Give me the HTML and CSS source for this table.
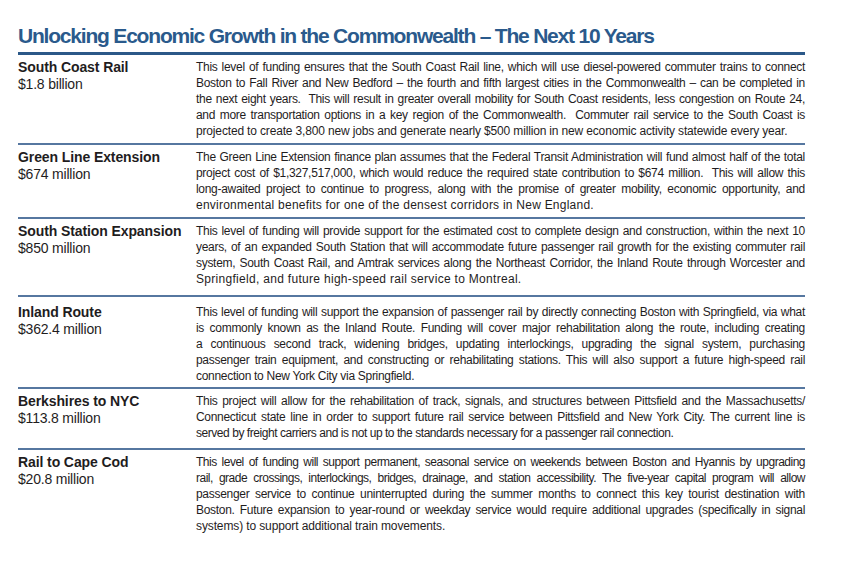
FILE: index.html
```html
<!DOCTYPE html>
<html lang="en">
<head>
<meta charset="utf-8">
<title>Unlocking Economic Growth in the Commonwealth</title>
<link rel="stylesheet" href="styles.css">
</head>
<body>
<main class="page">
  <h1 class="title">Unlocking Economic Growth in the Commonwealth – The Next 10 Years</h1>
  <section class="table">
    <div class="row row-1">
      <div class="label"><div class="name">South Coast Rail</div><div class="amount">$1.8 billion</div></div>
      <div class="desc">
        <div class="ln">This level of funding ensures that the South Coast Rail line, which will use diesel-powered commuter trains to connect</div>
        <div class="ln">Boston to Fall River and New Bedford – the fourth and fifth largest cities in the Commonwealth – can be completed in</div>
        <div class="ln">the next eight years.&nbsp; This will result in greater overall mobility for South Coast residents, less congestion on Route 24,</div>
        <div class="ln">and more transportation options in a key region of the Commonwealth.&nbsp; Commuter rail service to the South Coast is</div>
        <div class="ln last last-1">projected to create 3,800 new jobs and generate nearly $500 million in new economic activity statewide every year.</div>
      </div>
    </div>
    <div class="row row-2">
      <div class="label"><div class="name">Green Line Extension</div><div class="amount">$674 million</div></div>
      <div class="desc">
        <div class="ln">The Green Line Extension finance plan assumes that the Federal Transit Administration will fund almost half of the total</div>
        <div class="ln">project cost of $1,327,517,000, which would reduce the required state contribution to $674 million.&nbsp; This will allow this</div>
        <div class="ln">long-awaited project to continue to progress, along with the promise of greater mobility, economic opportunity, and</div>
        <div class="ln last last-2">environmental benefits for one of the densest corridors in New England.</div>
      </div>
    </div>
    <div class="row row-3">
      <div class="label"><div class="name">South Station Expansion</div><div class="amount">$850 million</div></div>
      <div class="desc">
        <div class="ln">This level of funding will provide support for the estimated cost to complete design and construction, within the next 10</div>
        <div class="ln">years, of an expanded South Station that will accommodate future passenger rail growth for the existing commuter rail</div>
        <div class="ln">system, South Coast Rail, and Amtrak services along the Northeast Corridor, the Inland Route through Worcester and</div>
        <div class="ln last last-3">Springfield, and future high-speed rail service to Montreal.</div>
      </div>
    </div>
    <div class="row row-4">
      <div class="label"><div class="name">Inland Route</div><div class="amount">$362.4 million</div></div>
      <div class="desc">
        <div class="ln">This level of funding will support the expansion of passenger rail by directly connecting Boston with Springfield, via what</div>
        <div class="ln">is commonly known as the Inland Route. Funding will cover major rehabilitation along the route, including creating</div>
        <div class="ln">a continuous second track, widening bridges, updating interlockings, upgrading the signal system, purchasing</div>
        <div class="ln">passenger train equipment, and constructing or rehabilitating stations. This will also support a future high-speed rail</div>
        <div class="ln last">connection to New York City via Springfield.</div>
      </div>
    </div>
    <div class="row row-5">
      <div class="label"><div class="name">Berkshires to NYC</div><div class="amount">$113.8 million</div></div>
      <div class="desc">
        <div class="ln">This project will allow for the rehabilitation of track, signals, and structures between Pittsfield and the Massachusetts/</div>
        <div class="ln">Connecticut state line in order to support future rail service between Pittsfield and New York City. The current line is</div>
        <div class="ln last last-5">served by freight carriers and is not up to the standards necessary for a passenger rail connection.</div>
      </div>
    </div>
    <div class="row row-6">
      <div class="label"><div class="name">Rail to Cape Cod</div><div class="amount">$20.8 million</div></div>
      <div class="desc">
        <div class="ln tight">This level of funding will support permanent, seasonal service on weekends between Boston and Hyannis by upgrading</div>
        <div class="ln tight">rail, grade crossings, interlockings, bridges, drainage, and station accessibility. The five-year capital program will allow</div>
        <div class="ln">passenger service to continue uninterrupted during the summer months to connect this key tourist destination with</div>
        <div class="ln">Boston. Future expansion to year-round or weekday service would require additional upgrades (specifically in signal</div>
        <div class="ln last last-6">systems) to support additional train movements.</div>
      </div>
    </div>
  </section>
</main>
</body>
</html>
```

FILE: styles.css
```css
html, body {
  margin: 0;
  padding: 0;
  background: #ffffff;
}

.page {
  width: 787px;
  margin-left: 18px;
  padding-top: 24px;
  font-family: "Liberation Sans", Arial, sans-serif;
  color: #1f1d1e;
}

.title {
  margin: 0;
  font-size: 21px;
  line-height: 24px;
  font-weight: bold;
  letter-spacing: -1.2px;
  color: #2a5a8c;
  padding-bottom: 4px;
  border-bottom: 3px solid #2b5888;
}

.table {
  display: flex;
  flex-direction: column;
}

.row {
  display: flex;
  padding: 4px 0 4px;
  border-bottom: 2px solid #5677a0;
}

.row-6 {
  border-bottom: none;
}

.row-3 {
  padding-bottom: 8px;
}

.row-4 {
  padding-top: 7px;
  padding-bottom: 3px;
}

.row-5 {
  padding-bottom: 7px;
}

.label {
  width: 178px;
  flex: none;
}

.name {
  font-size: 14px;
  font-weight: bold;
  line-height: 17px;
  letter-spacing: -0.1px;
}

.amount {
  font-size: 14px;
  line-height: 17px;
  letter-spacing: -0.2px;
}

.desc {
  flex: 1;
  font-size: 12px;
  line-height: 16px;
  letter-spacing: -0.3px;
}

.ln {
  text-align: justify;
  text-align-last: justify;
}

.ln.last {
  text-align-last: left;
}

.ln.tight {
  letter-spacing: -0.5px;
}

.last-1 {
  letter-spacing: -0.16px;
}

.last-2 {
  letter-spacing: 0.24px;
}

.last-3 {
  letter-spacing: 0.3px;
}

.last-5 {
  letter-spacing: -0.45px;
}

.last-6 {
  letter-spacing: -0.12px;
}
```
